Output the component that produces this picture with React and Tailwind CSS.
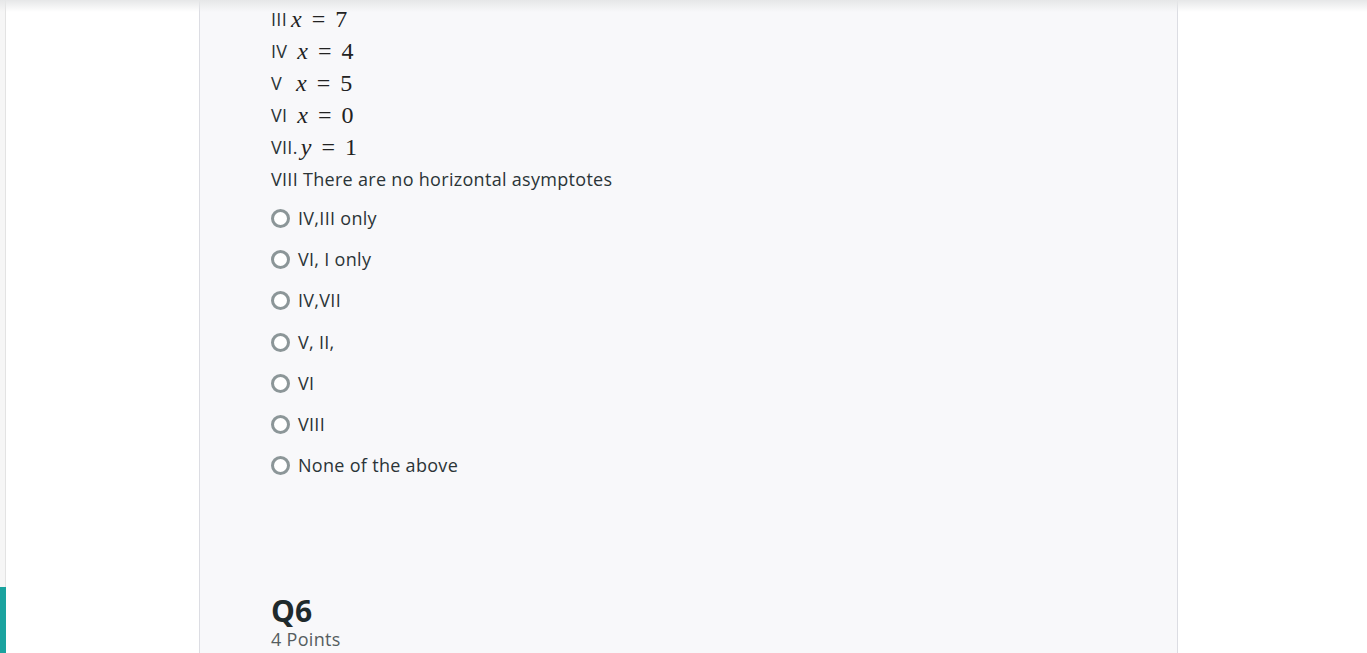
import React from "react";

const sans = { fontFamily: "'Open Sans', 'Noto Sans', sans-serif" };

function M({ children }) {
  return (
    <span className="font-['Liberation_Serif',serif] text-[24px] text-[#222] tracking-normal">{children}</span>
  );
}
function V({ children }) {
  return <span className="italic">{children}</span>;
}

const lines = [
  { r: "III", gap: "ml-[4px]", v: "x", n: "7" },
  { r: "IV", gap: "ml-[10px]", v: "x", n: "4" },
  { r: "V", gap: "ml-[14px]", v: "x", n: "5" },
  { r: "VI", gap: "ml-[10px]", v: "x", n: "0" },
  { r: "VII.", gap: "ml-[3px]", v: "y", n: "1" },
];

const options = ["IV,III only", "VI, I only", "IV,VII", "V, II,", "VI", "VIII", "None of the above"];

export default function App() {
  return (
    <div className="relative w-[1367px] h-[653px] overflow-hidden bg-white flex" style={sans}>
      <div className="absolute top-0 left-0 right-0 h-[12px] bg-gradient-to-b from-[#e6e7e8] to-transparent pointer-events-none" />
      <div className="w-[6px] h-full flex flex-col bg-[#f6f6f6] border-r border-[#e3e3e3]">
        <div className="flex-1" />
        <div className="h-[66px] bg-[#1aa39f] -mr-px" />
      </div>
      <div className="w-[194px] h-full bg-white border-r border-[#dcdde3]" />
      <div className="w-[978px] h-full bg-[#f8f8fa] border-r border-[#dcdde3] pl-[71px] pt-[3px] text-[18px] tracking-[0.3px] text-[#2b3437]">
        {lines.map((l) => (
          <div key={l.r} className="h-[32px] flex items-center">
            <span>{l.r}</span>
            <span className={l.gap}>
              <M>
                <V>{l.v}</V>
                <span className="mx-[10px]">=</span>
                {l.n}
              </M>
            </span>
          </div>
        ))}
        <div className="h-[32px] flex items-center">VIII There are no horizontal asymptotes</div>
        <div className="mt-[3px] flex flex-col">
          {options.map((o) => (
            <div key={o} className="h-[41.2px] flex items-center">
              <span className="w-[19px] h-[19px] rounded-full border-[3px] border-[#8c9698] bg-white box-border" />
              <span className="ml-[8px]">{o}</span>
            </div>
          ))}
        </div>
        <div className="mt-[109px] text-[30px] font-bold leading-[32px] tracking-normal text-[#1f2a2c]">Q6</div>
        <div className="text-[18px] leading-[24px] text-[#555d60]">4 Points</div>
      </div>
      <div className="flex-1" />
    </div>
  );
}
